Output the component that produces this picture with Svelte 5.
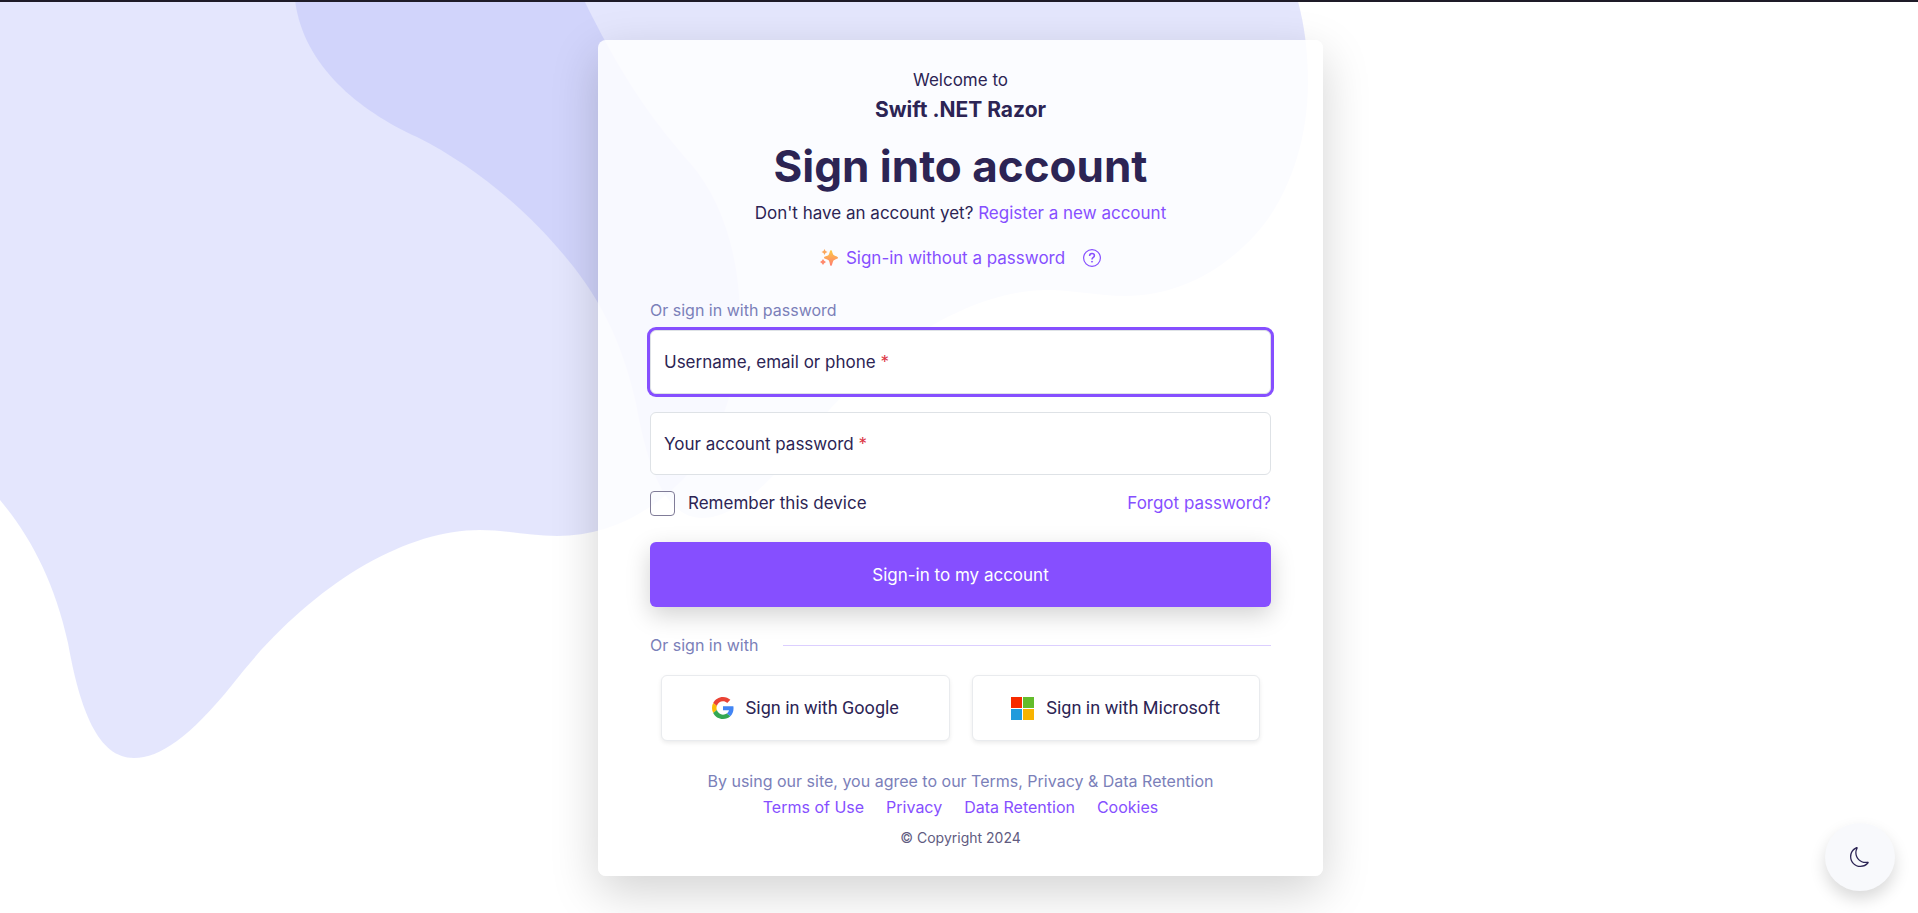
<script>
    let username = $state("");
    let password = $state("");
    let remember = $state(false);

    const legalLinks = ["Terms of Use", "Privacy", "Data Retention", "Cookies"];
</script>

<div class="page">
    <svg class="backdrop" viewBox="0 0 1918 913" preserveAspectRatio="xMinYMin slice" aria-hidden="true">
        <defs>
            <path
                id="blob"
                d="M584 0C628 90 660 128 690 163C722 200 740 255 740 322C740 390 715 445 687 475C650 515 605 536 557 536C530 536 505 530 480 530C400 530 305 590 232 685C190 737 160 758 134 758C98 758 80 710 68 643C54 580 30 536 0 500C-40 450 -95 405 -151 377C-210 350 -265 305 -273 240L-273 0Z"
            />
        </defs>
        <use href="#blob" />
        <use href="#blob" x="568" y="-240" />
    </svg>

    <main class="card">
        <header class="intro">
            <p class="welcome">Welcome to</p>
            <p class="brand">Swift .NET Razor</p>
            <h1>Sign into account</h1>
            <p class="register">Don't have an account yet? <a href="#register">Register a new account</a></p>
            <p class="passwordless">
                <a href="#passwordless">
                    <svg class="sparkle" viewBox="0 0 18 18" aria-hidden="true">
                        <defs>
                            <linearGradient id="spark" x1="0" y1="0" x2="0" y2="1">
                                <stop offset="0" stop-color="#fccb45" />
                                <stop offset="1" stop-color="#ff7c70" />
                            </linearGradient>
                        </defs>
                        <path fill="url(#spark)" d="M11 1C12.200 1 12.400 5 13.600 6S18 7.500 18 8.700S15 10.200 13.800 11.300S12.200 17 11 17S9.800 12.500 8.600 11.300S4 9.900 4 8.700S7.400 7.300 8.500 6.100S9.800 1 11 1Z" />
                        <path fill="#fba65b" d="M4.500 0L5.500 2L7.500 3L5.500 4L4.500 6L3.500 4L1.500 3L3.500 2Z" />
                        <path fill="#ff8a6e" d="M3 10L4.200 11.800L6 13L4.200 14.200L3 16L1.800 14.200L0 13L1.800 11.800Z" />
                    </svg>
                    Sign-in without a password
                </a>
                <a href="#help" aria-label="Help">
                    <svg class="help" viewBox="0 0 18 18" fill="none" stroke="currentColor" aria-hidden="true">
                        <circle cx="9" cy="9" r="8.400" stroke-width="1.200" />
                        <path stroke-width="1.500" d="M6.600 7C6.600 5.300 7.600 4.600 9 4.600S11.400 5.400 11.400 6.700C11.400 8.500 9 8.400 9 10.600" />
                        <circle cx="9" cy="12.700" r=".5" fill="currentColor" />
                    </svg>
                </a>
            </p>
        </header>

        <form onsubmit={(e) => e.preventDefault()}>
            <p class="hint">Or sign in with password</p>
            <div class="field active">
                <input id="username" type="text" bind:value={username} required />
                {#if !username}
                    <label for="username">Username, email or phone <span>*</span></label>
                {/if}
            </div>
            <div class="field">
                <input id="password" type="password" bind:value={password} required />
                {#if !password}
                    <label for="password">Your account password <span>*</span></label>
                {/if}
            </div>
            <div class="options">
                <label class="remember">
                    <input type="checkbox" bind:checked={remember} />
                    Remember this device
                </label>
                <a href="#forgot">Forgot password?</a>
            </div>
            <button class="submit" type="submit">Sign-in to my account</button>
        </form>

        <div class="divider"><span>Or sign in with</span></div>

        <div class="providers">
            <button type="button">
                <svg width="22" height="22" viewBox="0 0 48 48" aria-hidden="true">
                    <path fill="#ea4335" d="M24 9.500c3.540 0 6.710 1.220 9.210 3.600l6.850-6.850C35.900 2.380 30.470 0 24 0 14.620 0 6.510 5.380 2.560 13.220l7.980 6.190C12.430 13.720 17.740 9.500 24 9.500z" />
                    <path fill="#4285f4" d="M46.980 24.550c0-1.570-.15-3.090-.38-4.550H24v9.020h12.940c-.58 2.960-2.260 5.480-4.780 7.180l7.730 6c4.510-4.180 7.090-10.360 7.090-17.650z" />
                    <path fill="#fbbc05" d="M10.530 28.590c-.48-1.450-.76-2.990-.76-4.590s.27-3.140.76-4.590l-7.980-6.190C.92 16.460 0 20.120 0 24c0 3.880.92 7.540 2.560 10.780l7.970-6.190z" />
                    <path fill="#34a853" d="M24 48c6.480 0 11.930-2.130 15.890-5.810l-7.730-6c-2.150 1.450-4.920 2.300-8.160 2.300-6.260 0-11.570-4.220-13.470-9.910l-7.980 6.190C6.510 42.620 14.620 48 24 48z" />
                </svg>
                Sign in with Google
            </button>
            <button type="button">
                <svg width="23" height="23" viewBox="0 0 23 23" aria-hidden="true">
                    <path fill="#f72a00" d="M0 0h11v11H0z" />
                    <path fill="#63bc2b" d="M12 0h11v11H12z" />
                    <path fill="#219bdc" d="M0 12h11v11H0z" />
                    <path fill="#f8b300" d="M12 12h11v11H12z" />
                </svg>
                Sign in with Microsoft
            </button>
        </div>

        <footer>
            <p class="agree">By using our site, you agree to our Terms, Privacy & Data Retention</p>
            <nav>
                {#each legalLinks as link}
                    <a href="#legal">{link}</a>
                {/each}
            </nav>
            <p class="copyright">© Copyright 2024</p>
        </footer>
    </main>

    <button class="theme" type="button" aria-label="Toggle dark mode">
        <svg width="20" height="20" viewBox="0 0 16 16" fill="currentColor" aria-hidden="true">
            <path d="M6 .278a.768.768 0 0 1 .08.858 7.208 7.208 0 0 0-.878 3.460c0 4.021 3.278 7.277 7.318 7.277.527 0 1.040-.055 1.533-.16a.787.787 0 0 1 .81.316.733.733 0 0 1-.031.893A8.349 8.349 0 0 1 8.344 16C3.734 16 0 12.286 0 7.710 0 4.266 2.114 1.312 5.124.06A.752.752 0 0 1 6 .278zM4.858 1.311A7.269 7.269 0 0 0 1.025 7.710c0 4.020 3.279 7.276 7.319 7.276a7.316 7.316 0 0 0 5.205-2.162c-.337.042-.68.063-1.029.063-4.610 0-8.343-3.714-8.343-8.290 0-1.167.242-2.278.681-3.286z" />
        </svg>
    </button>
</div>

<style>
    :global(body) {
        background: #fff;
        color: #2c2454;
        font-family: "Inter", "Open Sans", sans-serif;
        font-size: 17px;
        line-height: 28px;
    }

    .page {
        position: relative;
        box-sizing: border-box;
        min-height: 100vh;
        overflow: hidden;
        border-top: 2px solid #1e1b28;
        padding: 38px 14px 34px 17px;
    }

    .backdrop {
        position: absolute;
        inset: -2px 0 0;
        width: 100%;
        height: 100vh;
        fill: #a5acf8;
        fill-opacity: 0.3;
    }

    .card {
        position: relative;
        box-sizing: border-box;
        max-width: 725px;
        margin: 0 auto;
        padding: 26px 52px 24px;
        border-radius: 8px;
        background: rgba(255, 255, 255, 0.85);
        box-shadow: 0 16px 48px rgba(0, 0, 0, 0.175);
    }

    p,
    h1 {
        margin: 0;
    }

    a {
        color: #864fff;
        text-decoration: none;
    }

    input,
    button {
        font: inherit;
        color: inherit;
    }

    button {
        cursor: pointer;
    }

    .intro {
        text-align: center;
    }

    .brand {
        font-size: 21px;
        font-weight: 700;
        line-height: 32px;
    }

    h1 {
        margin-top: 14px;
        font-size: 44px;
        font-weight: 700;
        line-height: 52px;
    }

    .register {
        margin-top: 7px;
    }

    .passwordless {
        display: flex;
        justify-content: center;
        gap: 18px;
        margin-top: 17px;
    }

    .passwordless a {
        display: flex;
        align-items: center;
        gap: 8px;
    }

    .sparkle,
    .help {
        width: 18px;
        height: 18px;
    }

    .hint,
    .divider,
    .agree {
        color: #7b80b9;
        font-size: 16px;
    }

    .hint {
        margin: 24px 0 6px;
        line-height: 28px;
    }

    .field {
        display: grid;
        align-items: center;
        margin-bottom: 18px;
    }

    .field input,
    .field label {
        grid-area: 1 / 1;
    }

    .field input {
        box-sizing: border-box;
        width: 100%;
        height: 63px;
        padding: 0 14px;
        border: 1px solid #dee2e6;
        border-radius: 6px;
        background: #fff;
        outline: none;
    }

    .field label {
        justify-self: start;
        padding-left: 14px;
        pointer-events: none;
    }

    .field span {
        color: #dc3545;
    }

    .field.active input {
        height: 64px;
        box-shadow: 0 0 0 3px #864fff;
    }

    .options {
        display: flex;
        justify-content: space-between;
        margin-top: -4px;
    }

    .remember {
        display: flex;
        align-items: center;
        gap: 13px;
    }

    .remember input {
        appearance: none;
        box-sizing: border-box;
        width: 25px;
        height: 25px;
        margin: 0;
        border: 1px solid #807c98;
        border-radius: 4px;
        background: transparent;
    }

    .remember input:checked {
        background: #864fff;
    }

    .submit {
        display: block;
        width: 100%;
        height: 65px;
        margin-top: 25px;
        border: 0;
        border-radius: 6px;
        background: #864fff;
        color: #fff;
        box-shadow: 0 8px 24px rgba(0, 0, 0, 0.18);
    }

    .divider {
        display: flex;
        align-items: center;
        gap: 25px;
        margin-top: 24px;
    }

    .divider::after {
        content: "";
        flex: 1;
        height: 1px;
        background: #dccfff;
    }

    .providers {
        display: grid;
        grid-template-columns: 1fr 1fr;
        gap: 22px;
        margin: 16px 11px 0;
    }

    .providers button {
        display: flex;
        align-items: center;
        justify-content: center;
        gap: 12px;
        height: 66px;
        border: 1px solid #e9ebee;
        border-radius: 6px;
        background: #fff;
        font-family: Roboto, sans-serif;
        font-size: 18px;
        box-shadow: 0 2px 4px rgba(0, 0, 0, 0.08);
    }

    footer {
        margin-top: 27px;
        text-align: center;
        font-size: 16px;
        line-height: 26px;
    }

    nav {
        display: flex;
        justify-content: center;
        gap: 22px;
    }

    .copyright {
        margin-top: 4px;
        color: #615b7f;
        font-size: 14px;
        line-height: 28px;
    }

    .theme {
        position: fixed;
        right: 23px;
        bottom: 22px;
        display: flex;
        align-items: center;
        justify-content: center;
        width: 70px;
        height: 68px;
        padding: 0;
        border: 0;
        border-radius: 50%;
        background: #f8f9fc;
        box-shadow: 0 8px 16px rgba(0, 0, 0, 0.15);
    }
</style>
